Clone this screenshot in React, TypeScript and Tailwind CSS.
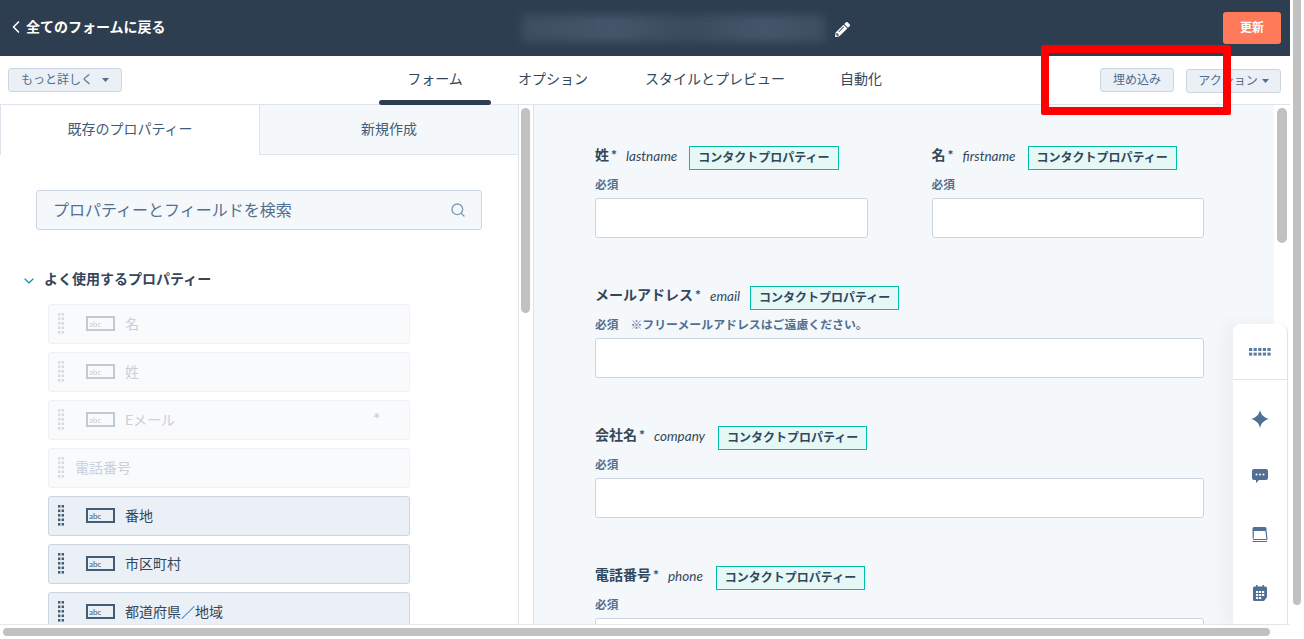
import React from 'react'
import { ChevronDown, ChevronLeft, Search } from 'lucide-react'
import { FaPencilAlt } from 'react-icons/fa'

const Caret = ({ className }: { className: string }) => (
  <svg width="7" height="4" viewBox="0 0 7 4" className={className}>
    <path d="M0 0h7L3.5 4z" fill="currentColor" />
  </svg>
)

const DragDots = ({ className }: { className: string }) => (
  <svg width="6" height="22" viewBox="0 0 6 22" className={className}>
    {[0, 4.5, 9, 13.5, 18].map((y) => (
      <g key={y} fill="currentColor">
        <rect x="0" y={y} width="2.4" height="2.6" />
        <rect x="3.6" y={y} width="2.4" height="2.6" />
      </g>
    ))}
  </svg>
)

const AbcIcon = () => (
  <div className="ml-[22px] -mt-[1px] flex h-[15px] w-[29px] items-center border-2 border-[#425b76] pl-[1px] text-[8px] leading-none text-[#425b76]">
    abc
  </div>
)

const PropertyRow = ({
  label,
  disabled,
  noIcon,
  required,
}: {
  label: string
  disabled?: boolean
  noIcon?: boolean
  required?: boolean
}) => (
  <div
    className={`flex h-10 w-[362px] items-center rounded-[3px] border pl-[9px] text-sm ${
      disabled
        ? 'border-[#eef1f5] bg-[#f9fafc] text-[#c8d0da]'
        : 'border-[#cbd6e2] bg-[#eaf0f6] text-[#33475b]'
    }`}
  >
    <DragDots className={disabled ? 'text-[#d5dce6]' : 'text-[#425b76]'} />
    {noIcon ? null : (
      <div className={disabled ? 'opacity-30' : ''}>
        <AbcIcon />
      </div>
    )}
    <span className={noIcon ? 'ml-[11px]' : 'ml-[10px]'}>{label}</span>
    {required ? <span className="ml-auto mr-[29px] -mt-1 text-base font-bold">*</span> : null}
  </div>
)

const FieldHead = ({
  label,
  name,
  gap,
}: {
  label: string
  name: string
  gap: string
}) => (
  <div className="flex h-6 items-center">
    <span className="-mt-[6px] text-sm font-bold text-[#33475b]">
      {label}
      <span className="ml-[2px]">*</span>
    </span>
    <span className="-mt-[4px] ml-[9px] text-[13.5px] italic text-[#33475b]">{name}</span>
    <span
      className={`${gap} flex h-6 items-center whitespace-nowrap border border-[#00bda5] bg-[#e5f8f6] px-2 text-xs font-bold text-[#33475b]`}
    >
      コンタクトプロパティー
    </span>
  </div>
)

const Field = ({
  label,
  name,
  gap,
  note,
}: {
  label: string
  name: string
  gap: string
  note?: string
}) => (
  <div className="h-[92px]">
    <FieldHead label={label} name={name} gap={gap} />
    <div className="mt-[7px] flex h-[16px] items-center text-[11.7px] font-bold text-[#516f90]">
      <span>必須</span>
      {note ? <span className="ml-[12px] text-[11.9px]">{note}</span> : null}
    </div>
    <div className="mt-[5px] h-10 rounded-[3px] border border-[#cbd6e2] bg-white" />
  </div>
)

const SideIcons = () => (
  <div className="absolute right-[16px] top-[324px] flex h-[300px] w-[55px] flex-col rounded-t-lg border-r border-[#dfe3eb] bg-white text-[#4f6f93] shadow-[-10px_0_14px_rgba(66,91,118,0.05)]">
    <div className="flex h-[56px] items-center justify-center border-b border-[#dfe3eb]">
      <svg width="22" height="8" viewBox="0 0 22 8" className="text-[#5c7da3]">
        {[0, 4.6, 9.2, 13.8, 18.4].map((x) => (
          <g key={x} fill="currentColor">
            <rect x={x} y="0" width="3.2" height="3" />
            <rect x={x} y="4.6" width="3.2" height="3" />
          </g>
        ))}
      </svg>
    </div>
    <div className="flex flex-1 flex-col items-center">
      <svg width="18" height="18" viewBox="0 0 18 18" className="mt-[30px]">
        <path d="M9 0C10 5 13 7.500 18 9 13 10.500 10 13 9 18 8 13 5 10.500 0 9 5 7.500 8 5 9 0z" fill="currentColor" />
      </svg>
      <svg width="16" height="14" viewBox="0 0 16 14" className="mt-[41px]">
        <path d="M2 0h12a2 2 0 0 1 2 2v7a2 2 0 0 1-2 2H7l-3 3v-3H2a2 2 0 0 1-2-2V2a2 2 0 0 1 2-2z" fill="currentColor" />
        <circle cx="4.5" cy="5.5" r="1" fill="#fff" />
        <circle cx="8" cy="5.5" r="1" fill="#fff" />
        <circle cx="11.5" cy="5.5" r="1" fill="#fff" />
      </svg>
      <svg width="16" height="16" viewBox="0 0 16 16" className="mt-[44px]">
        <path d="M2 0h11a1.500 1.500 0 0 1 1.500 1.500V4H.500V1.500A1.500 1.500 0 0 1 2 0z" fill="currentColor" />
        <path d="M1.200 4v7.500M14 4l1 8.500M1 12.500h14" fill="none" stroke="currentColor" strokeWidth="1.200" />
        <path d="M1 14.500h13.500" fill="none" stroke="currentColor" strokeWidth="1.200" strokeLinecap="round" />
      </svg>
      <svg width="14" height="16" viewBox="0 0 14 16" className="mt-[42px]">
        <path d="M1.500 1.500H3V0h1.500v1.500h5V0H11v1.500h1.500A1.500 1.500 0 0 1 14 3v9l-3 4H1.500A1.500 1.500 0 0 1 0 14.500V3a1.500 1.500 0 0 1 1.500-1.500z" fill="currentColor" />
        <g fill="#fff">
          <rect x="3" y="6" width="2.200" height="2" />
          <rect x="6" y="6" width="2.200" height="2" />
          <rect x="9" y="6" width="2.200" height="2" />
          <rect x="3" y="9" width="2.200" height="2" />
          <rect x="6" y="9" width="2.200" height="2" />
          <rect x="9" y="9" width="2.200" height="2" />
          <rect x="3" y="12" width="2.200" height="2" />
          <rect x="6" y="12" width="2.200" height="2" />
        </g>
      </svg>
    </div>
  </div>
)

const App = () => {
  return (
    <div className="relative flex h-[639px] w-[1304px] overflow-hidden bg-white font-['Lato','Noto_Sans_CJK_JP',sans-serif]">
      <div className="flex w-[1290px] flex-col">
        <header className="flex h-14 shrink-0 items-center bg-[#2d3e50] text-white">
          <div className="flex w-[522px] items-center pb-[2px] pl-[6px] text-sm font-bold">
            <ChevronLeft size={20} strokeWidth={2} className="-mr-[1px]" />
            <span className="ml-[1px]">全てのフォームに戻る</span>
          </div>
          <div className="h-[27px] w-[303px] bg-[linear-gradient(90deg,#3d4e61,#45566a_30%,#3a4b5e_55%,#45566a_80%,#3d4e61)] blur-[4px]" />
          <FaPencilAlt size={15} className="ml-[10px] mt-[2px]" />
          <button className="ml-auto mr-[9px] h-8 w-[58px] rounded-[3px] bg-[#ff7a59] text-xs font-bold text-white">
            更新
          </button>
        </header>

        <nav className="flex h-[49px] shrink-0 items-center border-b border-[#dfe3eb]">
          <div className="w-[379px] pl-2">
            <button className="flex h-6 w-[114px] items-center rounded-[3px] border border-[#cbd6e2] bg-[#eaf0f6] pl-3 text-xs text-[#506e91]">
              もっと詳しく
              <Caret className="ml-[9px]" />
            </button>
          </div>
          <div className="flex h-full pb-[2px] text-sm text-[#33475b]">
            <div className="relative flex w-[112px] items-center justify-center">
              フォーム
              <div className="absolute bottom-[-3px] left-0 h-[5px] w-[112px] rounded-[3px] bg-[#2d3e50]" />
            </div>
            <div className="flex items-center pl-[27px]">オプション</div>
            <div className="flex items-center pl-[57px]">スタイルとプレビュー</div>
            <div className="flex items-center pl-[55px]">自動化</div>
          </div>
          <div className="ml-auto flex items-center pr-[9px]">
            <button className="flex h-6 w-[74px] items-center justify-center rounded-[3px] border border-[#cbd6e2] bg-[#eaf0f6] text-xs text-[#506e91]">
              埋め込み
            </button>
            <button className="ml-3 mt-[2px] flex h-6 w-[95px] items-center justify-center rounded-[3px] border border-[#cbd6e2] bg-[#eaf0f6] text-xs text-[#506e91]">
              アクション
              <Caret className="ml-1" />
            </button>
          </div>
        </nav>

        <div className="flex min-h-0 flex-1">
          <aside className="w-[519px] shrink-0 overflow-hidden border-r border-[#dfe3eb]">
            <div className="flex h-[50px] text-sm text-[#425b76]">
              <div className="flex w-[259px] items-center justify-center border-l border-[#dfe3eb] pb-[2px]">
                既存のプロパティー
              </div>
              <div className="flex flex-1 items-center justify-center border-b border-l border-[#dfe3eb] bg-[#f5f8fa] pb-[2px]">
                新規作成
              </div>
            </div>
            <div className="ml-9 mt-[35px] flex h-10 w-[446px] items-center justify-between rounded-[3px] border border-[#cbd6e2] bg-[#f5f8fa] pl-4 pr-[15px] text-base text-[#516f90]">
              プロパティーとフィールドを検索
              <Search size={16} className="text-[#7c98b6]" />
            </div>
            <div className="mt-[39px] flex h-5 items-center pl-[21px] text-sm font-bold text-[#33475b]">
              <ChevronDown size={16} strokeWidth={1.75} className="mt-1 text-[#0091ae]" />
              <span className="ml-[7px]">よく使用するプロパティー</span>
            </div>
            <div className="ml-12 mt-[15px] flex flex-col gap-2">
              <PropertyRow label="名" disabled />
              <PropertyRow label="姓" disabled />
              <PropertyRow label="Eメール" disabled required />
              <PropertyRow label="電話番号" disabled noIcon />
              <PropertyRow label="番地" />
              <PropertyRow label="市区町村" />
              <PropertyRow label="都道府県／地域" />
            </div>
          </aside>

          <div className="w-[14px] shrink-0 pl-[2px] pt-[3px]">
            <div className="h-[205px] w-[9px] rounded-full bg-[#c1c1c1]" />
          </div>

          <main className="w-[741px] shrink-0 overflow-hidden border-l border-[#dfe3eb] bg-[#f5f8fa] pl-[61px] pt-[41px]">
            <div className="flex w-[609px] flex-col gap-12">
              <div className="grid grid-cols-2 gap-x-16">
                <Field label="姓" name="lastname" gap="ml-[12px]" />
                <Field label="名" name="firstname" gap="ml-[12px]" />
              </div>
              <Field
                label="メールアドレス"
                name="email"
                gap="ml-[10px]"
                note="※フリーメールアドレスはご遠慮ください。"
              />
              <Field label="会社名" name="company" gap="ml-[13px]" />
              <Field label="電話番号" name="phone" gap="ml-[13px]" />
            </div>
          </main>

          <div className="flex-1 pl-[3px] pt-[3px]">
            <div className="h-[135px] w-[10px] rounded-full bg-[#c1c1c1]" />
          </div>
        </div>

        <div className="flex h-[15px] shrink-0 items-center border-t border-[#e8e8e8] pl-[3px]">
          <div className="h-[8px] w-[1267px] rounded-full bg-[#c1c1c1]" />
        </div>
      </div>

      <div className="w-[14px] pl-[3px]">
        <div className="h-[605px] w-2 rounded-b-full bg-[#c1c1c1]" />
      </div>

      <SideIcons />

      {/* red annotation */}
      <div className="absolute left-[1041px] top-[45px] h-[70px] w-[190px] rounded-[2px] border-8 border-[#ff0000]" />
    </div>
  )
}

export default App
